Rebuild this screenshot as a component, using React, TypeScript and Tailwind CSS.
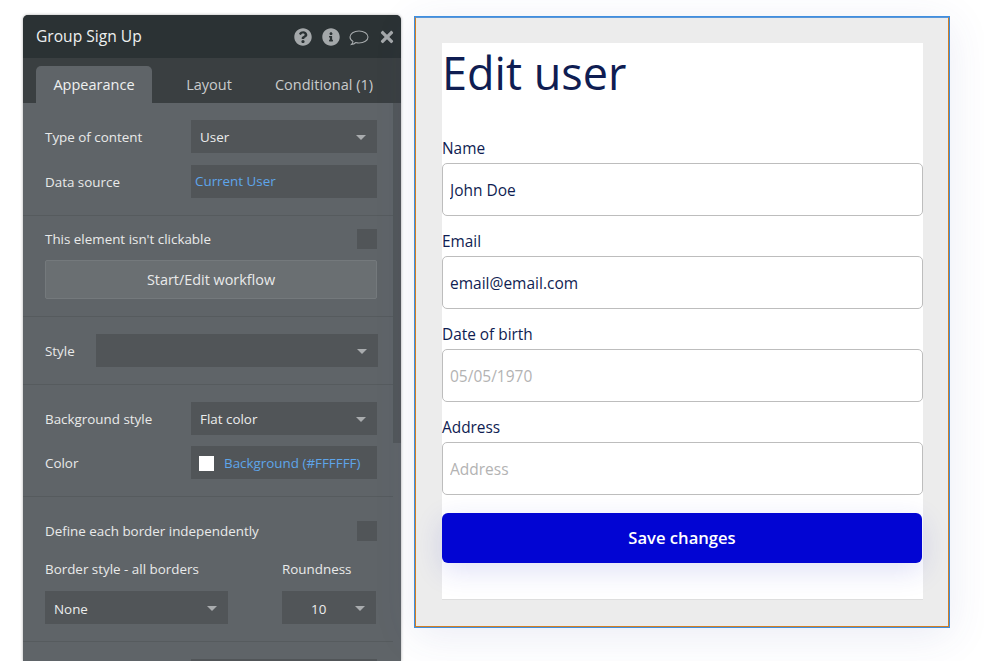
import { FaQuestionCircle, FaInfoCircle, FaTimes } from 'react-icons/fa';
import type { ReactNode } from 'react';

function Caret() {
  return <span className="absolute right-[11px] top-[15px] w-0 h-0 border-x-[5px] border-x-transparent border-t-[5px] border-t-[#a9acae]" />;
}

function Select({ value, className }: { value?: string; className: string }) {
  return (
    <div className={`relative h-[33px] bg-[#515558] flex items-center pl-[9px] pt-[2px] text-[13.4px] text-[#eceded] ${className}`}>
      {value}
      <Caret />
    </div>
  );
}

function Row({ label, children }: { label: string; children: ReactNode }) {
  return (
    <div className="flex items-center justify-between">
      <span className="text-[13.4px] pt-[1px] text-[#e9eaea]">{label}</span>
      {children}
    </div>
  );
}

function CheckRow({ label }: { label: string }) {
  return (
    <div className="flex items-center justify-between">
      <span className="text-[13.4px] text-[#e9eaea]">{label}</span>
      <span className="w-[20px] h-[20px] bg-[#515558]" />
    </div>
  );
}

function Section({ className, children }: { className: string; children: ReactNode }) {
  return <div className={`border-b border-[#565b5e] pl-[22px] pr-[16px] ${className}`}>{children}</div>;
}

function PropertyPanel() {
  return (
    <div className="w-[378px] h-[646px] shrink-0 overflow-hidden rounded-t-[5px] bg-[#5f6468] shadow-[0_0_3px_rgba(0,0,0,0.35)]">
      <div className="h-[43px] bg-[#2b3234] flex items-center pl-[13px] pr-[5px]">
        <span className="text-[15.6px] pt-[1px] text-[#eef0f0]">Group Sign Up</span>
        <div className="ml-auto flex items-center text-[#a4a8aa]">
          <FaQuestionCircle className="w-[18px] h-[18px]" />
          <FaInfoCircle className="w-[18px] h-[18px] ml-[10px]" />
          <svg viewBox="0 0 20 18" className="w-[20px] h-[18px] ml-[9px] mt-[2px]" fill="none" stroke="currentColor" strokeWidth="1.1">
            <path d="M10 2C5 2 1 4.5 1 8c0 2 1.300 3.500 3 4.500-.2 1.200-.8 2.300-1.500 3 1.800-.2 3.300-1 4.300-2 1 .3 2.100.5 3.200.5 5 0 9-2.600 9-6s-4-6-9-6z" />
          </svg>
          <FaTimes className="w-[18px] h-[18px] ml-[9px]" />
        </div>
      </div>

      <div className="h-[45px] bg-[#3a3f41] flex items-end pl-[13px] text-[14.5px] text-[#c9cbcc]">
        <div className="w-[116px] h-[37px] bg-[#5f6468] rounded-t-[5px] flex items-center justify-center text-[#eef0f0]">Appearance</div>
        <div className="w-[114px] h-[37px] flex items-center justify-center">Layout</div>
        <div className="w-[116px] h-[37px] flex items-center justify-center whitespace-nowrap">Conditional (1)</div>
      </div>

      <div className="flex">
        <div className="w-[370px] shrink-0">
          <Section className="h-[113px] pt-[17px] flex flex-col gap-[12px]">
            <Row label="Type of content">
              <Select value="User" className="w-[186px]" />
            </Row>
            <Row label="Data source">
              <div className="w-[186px] h-[33px] bg-[#515558] flex items-center pl-[4px] text-[13.4px] text-[#5ea5ea]">Current User</div>
            </Row>
          </Section>

          <Section className="h-[101px] pt-[13px]">
            <CheckRow label="This element isn't clickable" />
            <div className="mt-[11px] h-[39px] bg-[#6a6f72] border border-[#74797c] rounded-[2px] flex items-center justify-center text-[14.4px] text-[#e9eaea]">
              Start/Edit workflow
            </div>
          </Section>

          <Section className="h-[68px] pt-[17px]">
            <Row label="Style">
              <Select className="w-[282px] mr-[-1px]" />
            </Row>
          </Section>

          <Section className="h-[112px] pt-[17px] flex flex-col gap-[11px]">
            <Row label="Background style">
              <Select value="Flat color" className="w-[186px]" />
            </Row>
            <Row label="Color">
              <div className="w-[186px] h-[33px] bg-[#515558] flex items-center pl-[8px] pt-[1px] text-[13.4px] text-[#5ea5ea]">
                <span className="w-[15px] h-[15px] bg-white mr-[10px]" />
                Background (#FFFFFF)
              </div>
            </Row>
          </Section>

          <Section className="h-[145px] pt-[24px]">
            <CheckRow label="Define each border independently" />
            <div className="mt-[19px] flex justify-between items-start">
              <div>
                <div className="text-[13.4px] text-[#e9eaea] leading-[18px]">Border style - all borders</div>
                <Select value="None" className="w-[183px] mt-[13px]" />
              </div>
              <div className="mr-[1px]">
                <div className="text-[13.4px] text-[#e9eaea] leading-[18px]">Roundness</div>
                <div className="relative w-[94px] h-[33px] mt-[13px] bg-[#515558] flex items-center pl-[29px] pt-[2px] text-[13.4px] text-[#eceded]">
                  10
                  <Caret />
                </div>
              </div>
            </div>
          </Section>

          <div className="pt-[17px] pl-[168px] pr-[16px]">
            <div className="h-[33px] bg-[#515558]" />
          </div>
        </div>
        <div className="w-[8px] h-[340px] bg-[#52575a]" />
      </div>
    </div>
  );
}

function Field({ label, value, placeholder }: { label: string; value?: string; placeholder?: string }) {
  return (
    <div className="h-[93px]">
      <div className="h-[28px] pt-[3px] text-[15.4px] leading-[22px] text-[#0f1d52]">{label}</div>
      <input
        readOnly
        value={value ?? ''}
        placeholder={placeholder}
        className="block w-full h-[53px] px-[7px] bg-white border border-[#bdbdbd] rounded-[5px] text-[15.5px] text-[#0f1d52] placeholder:text-[#b3b3b3] outline-none"
      />
    </div>
  );
}

function EditUserCanvas() {
  return (
    <div className="w-[536px] h-[612px] shrink-0 border border-[#3f8fe0] shadow-[0_8px_40px_rgba(60,70,160,0.10)]">
      <div className="h-full border border-[#d07f25] border-t-[#5a96d8] bg-[#ececec] pl-[26px] pr-[25px] pt-[25px]">
        <div className="h-[557px] bg-white border-b border-[#dedede]">
          <h1 className="h-[92px] text-[45px] leading-[60px] text-[#0f1d52]">Edit user</h1>
          <Field label="Name" value="John Doe" />
          <Field label="Email" value="email@email.com" />
          <Field label="Date of birth" placeholder="05/05/1970" />
          <Field label="Address" placeholder="Address" />
          <button className="block w-[480px] h-[50px] mt-[6px] bg-[#0205d3] rounded-[6px] text-[16.6px] font-semibold text-white shadow-[0_8px_28px_rgba(40,50,200,0.15)]">
            Save changes
          </button>
        </div>
      </div>
    </div>
  );
}

export default function App() {
  return (
    <div className="h-[661px] overflow-hidden bg-white flex items-start gap-[13px] pl-[23px] pt-[15px] font-['Open_Sans',sans-serif]">
      <PropertyPanel />
      <div className="pt-[1px]">
        <EditUserCanvas />
      </div>
    </div>
  );
}
